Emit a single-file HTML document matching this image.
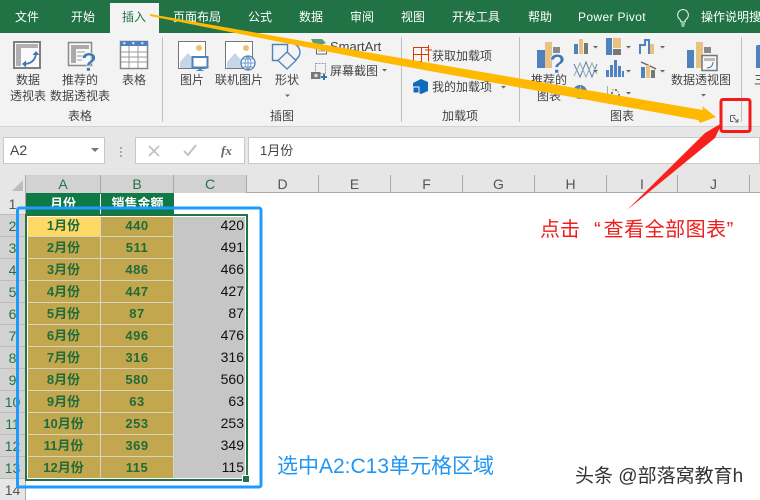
<!DOCTYPE html>
<html lang="zh"><head><meta charset="utf-8"><title>Excel</title>
<style>
html,body{margin:0;padding:0;background:#fff}
#p{position:relative;width:760px;height:500px;overflow:hidden;background:#fff;font-family:"Liberation Sans","Noto Sans CJK SC",sans-serif;color:#333}
#p div{position:absolute;white-space:nowrap;box-sizing:border-box}
.t{top:7px;height:20px;line-height:20px;font-size:12px;color:#fff;text-align:center}
.r{font-size:12px;line-height:16px;text-align:center;color:#444}
.g{top:108px;font-size:12px;line-height:16px;color:#444;text-align:center}
.sep{top:37px;height:85px;width:1px;background:#c0c0c0}
.ch{top:175px;height:18px;line-height:19px;font-size:14px;color:#555;text-align:center;border-right:1px solid #a8a8a8}
.rh{left:0;width:26px;height:22px;line-height:22px;font-size:14px;color:#555;text-align:center;background:#e6e6e6;border-bottom:1px solid #bcbcbc;border-right:1px solid #a8a8a8}
.rs{background:#d2d2d2;color:#217346}
.a,.b{height:22px;line-height:21px;font-size:13px;font-weight:bold;color:#1f6b3a;text-align:center;background:#c3a74f;border-right:1px solid #d8d4c4;border-bottom:1px solid #d8d4c4}
.a{left:27px;width:74px}.b{left:101px;width:73px;letter-spacing:.5px}
.c{left:174px;width:73px;height:22px;line-height:21px;font-size:14px;color:#111;text-align:right;padding-right:3px;background:#c6c6c6}
</style></head><body><div id="p">
<div style="left:0;top:0;width:760px;height:33px;background:#217346"></div>
<div style="left:0;top:33px;width:760px;height:93px;background:#f3f3f3"></div>
<div style="left:110px;top:3px;width:49px;height:30px;background:#f3f3f3"></div>
<div class="t" style="left:12px;width:30px">文件</div>
<div class="t" style="left:68px;width:30px">开始</div>
<div class="t" style="left:119px;width:30px;color:#217346">插入</div>
<div class="t" style="left:170px;width:54px">页面布局</div>
<div class="t" style="left:245px;width:30px">公式</div>
<div class="t" style="left:296px;width:30px">数据</div>
<div class="t" style="left:347px;width:30px">审阅</div>
<div class="t" style="left:398px;width:30px">视图</div>
<div class="t" style="left:450px;width:52px">开发工具</div>
<div class="t" style="left:525px;width:30px">帮助</div>
<div class="t" style="left:576px;width:72px;letter-spacing:.35px">Power Pivot</div>
<div class="t" style="left:701px;width:80px;text-align:left">操作说明搜索</div>
<svg style="position:absolute;left:675px;top:8px" width="16" height="20" viewBox="0 0 16 20"><path d="M8 1.500a5.500 5.500 0 0 0-3 10c.7.6 1 1.200 1 2.500h4c0-1.300.3-1.900 1-2.500a5.500 5.500 0 0 0-3-10zM6 16h4M6.500 18h3" fill="none" stroke="#fff"/></svg>

<!-- ribbon icons -->
<svg style="position:absolute;left:0;top:33px" width="760" height="93" viewBox="0 33 760 93">
<g>
<rect x="14" y="42" width="26" height="26" fill="#fafafa" stroke="#7f7f7f" stroke-width="2"/><rect x="16" y="44" width="22" height="4" fill="#b0b0b0"/><rect x="16" y="44" width="5" height="22" fill="#b0b0b0"/><path d="M24 64c6 0 11-3 12-10" fill="none" stroke="#3f78b5" stroke-width="1.800"/><path d="M36 51l-3.500 4h7zM22 64l4-3.500v7z" fill="#3f78b5"/>
<rect x="68.500" y="42.500" width="23" height="23" fill="#f8f8f8" stroke="#8a8a8a" stroke-width="1.500"/><rect x="71" y="45" width="18" height="4" fill="#aaa"/><rect x="71" y="45" width="5" height="18" fill="#aaa"/><path d="M77 52h8M77 56h6M77 60h5" stroke="#bbb" stroke-width="1.500"/>
<text x="81" y="71" font-family="Liberation Sans" font-size="26" font-weight="bold" fill="#3f78b5" stroke="#f3f3f3" stroke-width=".5">?</text>
<rect x="120.500" y="41.500" width="27" height="27" fill="#fff" stroke="#888" stroke-width="1.500"/><rect x="120" y="41" width="28" height="5" fill="#4f81bd"/><path d="M121 52h26M121 57h26M121 62h26M129 46v22M138 46v22" stroke="#999"/><path d="M122.500 42.500h3.500l-1.750 2zM131.500 42.500h3.500l-1.750 2zM140.500 42.500h3.500l-1.750 2z" fill="#fff"/>
<rect x="178.500" y="41.500" width="27" height="27" fill="#fff" stroke="#777"/><circle cx="199" cy="48" r="3" fill="#eec06f"/><path d="M180 68v-6l8-9 8 9 3 6z" fill="#c5d6e8"/><rect x="192.500" y="57" width="15" height="10.500" fill="#fff" stroke="#4f81bd" stroke-width="2"/><path d="M198.500 69h3v1h2v1h-7v-1h2z" fill="#4f81bd"/>
<rect x="225.500" y="41.500" width="27" height="27" fill="#fff" stroke="#777"/><circle cx="246" cy="48" r="3" fill="#eec06f"/><path d="M227 68v-6l8-9 8 9 3 6z" fill="#c5d6e8"/><circle cx="248" cy="63" r="7" fill="#fff" stroke="#4f81bd" stroke-width="1.300"/><path d="M241 63h14M248 56v14M243 59h10M243 67h10M248 56c-4 4-4 10 0 14M248 56c4 4 4 10 0 14" fill="none" stroke="#4f81bd" stroke-width=".8"/>
<path d="M288 43c10-1 14 8 11 13-1 2-2 3-4 4M272.500 44.500h15v16h-15z" fill="none" stroke="#4f81bd" stroke-width="1.400"/><path d="M287 52l9 8.500-9 8.500-9-8.500z" fill="#f3f3f3" stroke="#4f81bd" stroke-width="1.300"/>
<path d="M311 39h11l4 4-8 3-5-3z" fill="#5d9c7a"/><rect x="316.500" y="45.500" width="10" height="8.500" fill="#fff" stroke="#666"/><path d="M318 48h7M318 51h7" stroke="#999"/>
<rect x="315.500" y="63.500" width="10" height="10" fill="none" stroke="#999" stroke-dasharray="2 1"/><rect x="311" y="72" width="9.500" height="7" fill="#777"/><circle cx="316" cy="75.500" r="1.800" fill="#ddd"/><path d="M324 74v6M321 77h6" stroke="#2f75b5" stroke-width="2"/>
<path d="M413.500 47.500h8v14h-8zM421.500 47.500h7v7h-7zM421.500 54.500h7v7M413.500 54.500h8M428.500 47v-2M425 50h7" fill="none" stroke="#d83b01"/>
<path d="M421 79l7 3v9l-7 3-8-3v-8z" fill="#0f6cbd"/><rect x="413" y="87" width="6" height="6" fill="#0f6cbd" stroke="#f3f3f3"/>
<path d="M537 50h8v18h-8z" fill="#4f81bd"/><path d="M545 42h7v26h-7z" fill="#e8c283"/><rect x="553" y="47" width="7" height="6" fill="#8a8a8a"/>
<text x="549" y="73" font-family="Liberation Sans" font-size="27" font-weight="bold" fill="#3f78b5" stroke="#f3f3f3" stroke-width=".6">?</text>
<path d="M574 44h4v10h-4z" fill="#4f81bd"/><path d="M579 39h4v15h-4z" fill="#e8c283"/><path d="M584 43h4v11h-4z" fill="#777"/>
<path d="M606 38h6v17h-6z" fill="#4f81bd"/><path d="M613 38h8v10h-8z" fill="#e8c283"/><path d="M613 49h8v6h-8z" fill="#777"/>
<path d="M640 54V45h5v-5h4v14" fill="none" stroke="#4f81bd" stroke-width="2"/><path d="M650 44h4v10h-4z" fill="#e8c283"/>
<path d="M574 64l6 13 6-15 6 15 5-13" fill="none" stroke="#4f81bd"/><path d="M574 76l6-13 6 14 6-14 5 11" fill="none" stroke="#9aa"/>
<path d="M606 70h3v7h-3zM610 65h3v12h-3zM614 60h3v17h-3zM618 66h3v11h-3zM622 71h2v6h-2z" fill="#4f81bd"/>
<path d="M641 62l9 4 6 3" fill="none" stroke="#666" stroke-width="1.500"/><path d="M641 67h4v11h-4z" fill="#4f81bd"/><path d="M646 65h4v13h-4z" fill="#e8c283"/><path d="M651 70h4v8h-4z" fill="#777"/>
<circle cx="580" cy="92" r="7" fill="#4f81bd"/><path d="M580 92v-7a7 7 0 0 1 0 7z" fill="#e8c283"/>
<path d="M607.500 86v13h13" fill="none" stroke="#aaa"/><path d="M611 92h2v2h-2zM615 89h2v2h-2zM618 94h2v2h-2z" fill="#4f81bd"/><path d="M612 89h2v2h-2zM617 91h2v2h-2z" fill="#e8c283"/>
<path d="M687 50h7v18h-7z" fill="#4f81bd"/><path d="M696 42h7v26h-7z" fill="#e8c283"/><path d="M704 47h7v6h-7z" fill="#8a8a8a"/>
<rect x="702" y="55.500" width="15" height="15" fill="#f7f7f7" stroke="#777" stroke-width="1.500"/><rect x="704" y="58" width="11" height="3" fill="#bbb"/><path d="M707 68c3 0 6-2 6-6" fill="none" stroke="#2f75b5"/>
<path d="M760 45h-2a2 2 0 0 0-2 2v21h4z" fill="#4f81bd"/>
</g>
<g fill="#666">
<path d="M285 94.500h5l-2.500 2.500z"/><path d="M501 86h5l-2.500 2.500z"/>
<path d="M593 46h5l-2.500 2.500z"/><path d="M626 46h5l-2.500 2.500z"/><path d="M660 46h5l-2.500 2.500z"/>
<path d="M593 70h5l-2.500 2.500z"/><path d="M626 70h5l-2.500 2.500z"/><path d="M660 70h5l-2.500 2.500z"/>
<path d="M626 92h5l-2.500 2.500z"/><path d="M701 94h5l-2.500 2.500z"/><path d="M382 69h5l-2.500 2.500z"/>
</g>
<path d="M730.500 115.500h5M730.500 115.500v6h3M733 117l5 5M738 119v3h-3" fill="none" stroke="#666"/>
</svg>
<div class="r" style="left:10px;top:72px;width:36px">数据<br>透视表</div>
<div class="r" style="left:47px;top:72px;width:66px">推荐的<br>数据透视表</div>
<div class="r" style="left:120px;top:72px;width:28px">表格</div>
<div class="r" style="left:178px;top:72px;width:28px">图片</div>
<div class="r" style="left:213px;top:72px;width:52px">联机图片</div>
<div class="r" style="left:273px;top:72px;width:28px">形状</div>
<div class="r" style="left:330px;top:39px;width:54px;text-align:left;font-size:13px">SmartArt</div>
<div class="r" style="left:330px;top:63px;width:54px;text-align:left">屏幕截图</div>
<div class="r" style="left:432px;top:48px;width:66px;text-align:left">获取加载项</div>
<div class="r" style="left:432px;top:79px;width:66px;text-align:left">我的加载项</div>
<div class="r" style="left:530px;top:72px;width:38px">推荐的<br>图表</div>
<div class="r" style="left:669px;top:72px;width:64px">数据透视图</div>
<div class="r" style="left:753px;top:72px;width:14px">三</div>
<div class="g" style="left:66px;width:28px">表格</div>
<div class="g" style="left:268px;width:28px">插图</div>
<div class="g" style="left:440px;width:40px">加载项</div>
<div class="g" style="left:608px;width:28px">图表</div>
<div class="sep" style="left:162px"></div><div class="sep" style="left:401px"></div><div class="sep" style="left:519px"></div><div class="sep" style="left:741px"></div>

<!-- formula bar -->
<div style="left:0;top:126px;width:760px;height:49px;background:#e6e6e6;border-top:1px solid #d2d2d2"></div>
<div style="left:3px;top:137px;width:102px;height:27px;background:#fff;border:1px solid #c8c8c8;line-height:25px;font-size:14px;padding-left:6px;color:#444">A2</div>
<svg style="position:absolute;left:0;top:126px" width="260" height="49" viewBox="0 126 260 49"><path d="M91 148h8l-4 4z" fill="#777"/><path d="M120 147h2v2h-2zM120 151h2v2h-2zM120 155h2v2h-2z" fill="#aaa"/></svg>
<div style="left:135px;top:137px;width:110px;height:27px;background:#fff;border:1px solid #c8c8c8"></div>
<svg style="position:absolute;left:135px;top:137px" width="110" height="27" viewBox="135 137 110 27"><path d="M149 146l10 10M159 146l-10 10" stroke="#c2c2c2" stroke-width="1.800"/><path d="M184 151l4 4 8-10" fill="none" stroke="#c2c2c2" stroke-width="2"/><text x="221" y="155" font-family="Liberation Serif" font-style="italic" font-weight="bold" font-size="13" fill="#666">fx</text></svg>
<div style="left:248px;top:137px;width:512px;height:27px;background:#fff;border:1px solid #c8c8c8;line-height:25px;font-size:13px;padding-left:11px;color:#444">1月份</div>

<!-- grid -->
<div style="left:0;top:175px;width:760px;height:18px;background:#e6e6e6;border-bottom:1px solid #a8a8a8"></div>
<div style="left:0;top:175px;width:26px;height:18px;background:#e6e6e6;border-right:1px solid #a8a8a8"></div>
<svg style="position:absolute;left:10px;top:178px" width="16" height="15"><path d="M13 2v11H2z" fill="#bdbdbd"/></svg>
<div class="ch" style="left:26px;width:75px;background:#d2d2d2;color:#217346">A</div>
<div class="ch" style="left:101px;width:73px;background:#d2d2d2;color:#217346">B</div>
<div class="ch" style="left:174px;width:73px;background:#d2d2d2;color:#217346">C</div>
<div class="ch" style="left:247px;width:72px">D</div>
<div class="ch" style="left:319px;width:72px">E</div>
<div class="ch" style="left:391px;width:72px">F</div>
<div class="ch" style="left:463px;width:72px">G</div>
<div class="ch" style="left:535px;width:72px">H</div>
<div class="ch" style="left:607px;width:71px">I</div>
<div class="ch" style="left:678px;width:72px">J</div>

<div class="rh" style="top:193px">1</div>
<div class="rh rs" style="top:215px">2</div><div class="rh rs" style="top:237px">3</div><div class="rh rs" style="top:259px">4</div><div class="rh rs" style="top:281px">5</div><div class="rh rs" style="top:303px">6</div><div class="rh rs" style="top:325px">7</div><div class="rh rs" style="top:347px">8</div><div class="rh rs" style="top:369px">9</div><div class="rh rs" style="top:391px">10</div><div class="rh rs" style="top:413px">11</div><div class="rh rs" style="top:435px">12</div><div class="rh rs" style="top:457px">13</div>
<div class="rh" style="top:479px">14</div>

<div style="left:26px;top:193px;width:148px;height:21px;background:#0f7a45"></div>
<div style="left:26px;top:193px;width:74px;height:22px;color:#fff;font-size:13px;font-weight:bold;line-height:21px;text-align:center">月份</div>
<div style="left:100px;top:194px;width:1px;height:20px;background:#fff"></div>
<div style="left:101px;top:193px;width:73px;height:22px;color:#fff;font-size:13px;font-weight:bold;line-height:21px;text-align:center">销售金额</div>

<div class="a" style="top:215px;background:#ffd966">1月份</div><div class="b" style="top:215px">440</div><div class="c" style="top:215px">420</div>
<div class="a" style="top:237px">2月份</div><div class="b" style="top:237px">511</div><div class="c" style="top:237px">491</div>
<div class="a" style="top:259px">3月份</div><div class="b" style="top:259px">486</div><div class="c" style="top:259px">466</div>
<div class="a" style="top:281px">4月份</div><div class="b" style="top:281px">447</div><div class="c" style="top:281px">427</div>
<div class="a" style="top:303px">5月份</div><div class="b" style="top:303px">87</div><div class="c" style="top:303px">87</div>
<div class="a" style="top:325px">6月份</div><div class="b" style="top:325px">496</div><div class="c" style="top:325px">476</div>
<div class="a" style="top:347px">7月份</div><div class="b" style="top:347px">316</div><div class="c" style="top:347px">316</div>
<div class="a" style="top:369px">8月份</div><div class="b" style="top:369px">580</div><div class="c" style="top:369px">560</div>
<div class="a" style="top:391px">9月份</div><div class="b" style="top:391px">63</div><div class="c" style="top:391px">63</div>
<div class="a" style="top:413px">10月份</div><div class="b" style="top:413px">253</div><div class="c" style="top:413px">253</div>
<div class="a" style="top:435px">11月份</div><div class="b" style="top:435px">369</div><div class="c" style="top:435px">349</div>
<div class="a" style="top:457px">12月份</div><div class="b" style="top:457px">115</div><div class="c" style="top:457px">115</div>

<div style="left:25px;top:214px;width:223px;height:267px;border:2px solid #217346;box-shadow:inset 0 0 0 1px #fff"></div>
<div style="left:243px;top:476px;width:6px;height:6px;background:#217346;outline:1px solid #fff"></div>

<!-- annotations -->
<div style="left:277px;top:454px;font-size:21px;line-height:26px;color:#2196f3">选中A2:C13单元格区域</div>
<div style="left:540px;top:217px;font-size:20px;line-height:26px;color:#f01c1c">点击<span style="margin-left:14px;margin-right:3px">“</span><span style="letter-spacing:.5px">查看全部图表</span>”</div>
<div style="left:575px;top:465px;font-size:19px;line-height:24px;color:#333">头条 @部落窝教育h</div>
<svg style="position:absolute;left:0;top:0" width="760" height="500">
<rect x="17.500" y="208" width="243.500" height="279" rx="2" fill="none" stroke="#1e9bff" stroke-width="3"/>
<path d="M150 14L150 16 380 62 698 120 700 123 716 117 702 106 703 110 380 54.500z" fill="#ffb900"/>
<rect x="721" y="99.500" width="29" height="32" rx="2" fill="none" stroke="#f01c1c" stroke-width="3"/>
<path d="M627 210L705 133 722 123 715 138z" fill="#f8201c"/>
</svg>
</div></body></html>
